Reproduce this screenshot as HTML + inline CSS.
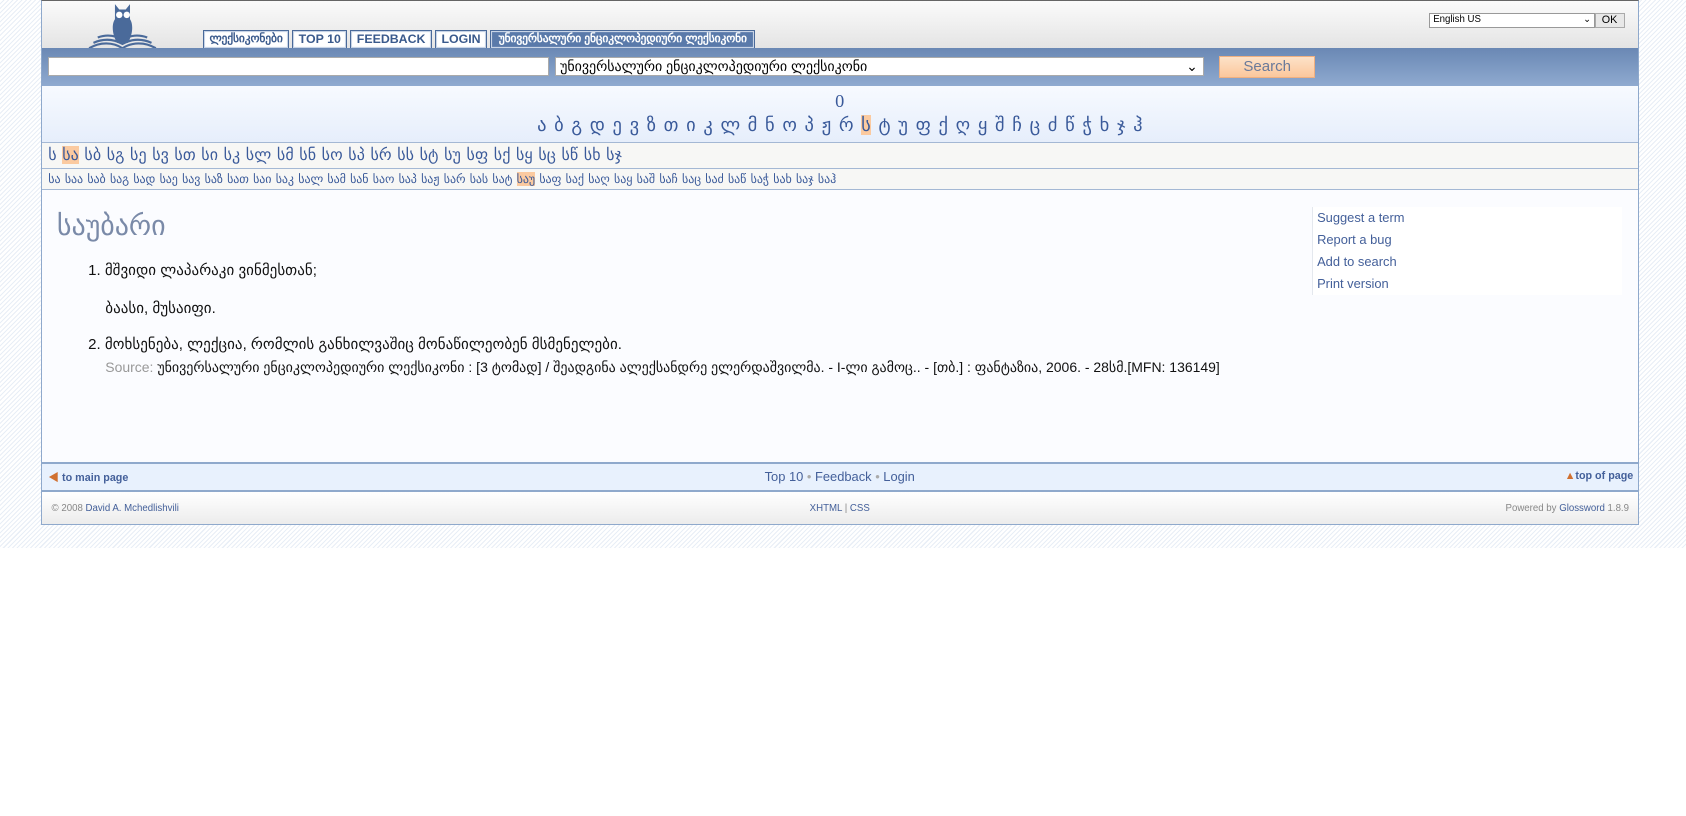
<!DOCTYPE html>
<html><head><meta charset="utf-8"><style>
html{background:#fff}
body{margin:0;}
#pg{zoom:1.0753;height:510px;background:repeating-linear-gradient(135deg,#fff 0 2px,#e8eef6 2px 3px);font-family:"Liberation Sans","Noto Sans CJK SC",sans-serif;position:relative}
#w{position:absolute;left:38px;top:0;width:1484px;height:486px;border:1px solid #8fa9cc;border-top:1px solid #666;background:#fbfcff;}
.hd{height:44px;background:linear-gradient(#fbfbfb,#e4e4e4);position:relative}
.tabs{position:absolute;left:150px;top:27px;display:flex;gap:3px}
.tab{border:1px solid #4a6a9a;border-bottom:none;background:#fff;color:#3a5a8c;font-weight:bold;font-size:11.5px;height:16px;line-height:16px;padding:0 5px;box-shadow:inset 0 0 0 1px #c8d4e6}
.tab.g{font-size:10.5px}
.tab.a{background:#5a7aaa;color:#fff;font-size:10.5px;padding:0 7px}
.sb{height:35px;background:linear-gradient(#6a88b4,#8faad0);position:relative}
.in{position:absolute;top:8px;height:18px;background:#fff;border:1px solid #aaa;box-sizing:border-box;font-size:13px;line-height:16px;padding-left:4px}
.btn{position:absolute;left:1095px;top:7px;width:89px;height:21px;background:linear-gradient(#fde2c8,#fbc79c);border:1px solid #f0b080;box-sizing:border-box;color:#6a7a9a;text-align:center;font-size:14px;line-height:19px}
.al{height:52px;background:linear-gradient(#f7faff,#e6eefb);text-align:center;color:#3a5a9a;font-family:"Liberation Serif",serif;font-size:17px;border-bottom:1px solid #a4b8d4}
.hl{background:#fbcaa0}
.r1{height:23px;border-bottom:1px solid #a4b8d4;background:#f7f7f5;color:#3a5a9a;font-size:15px;line-height:23px;padding-left:6px;word-spacing:1px}
.r2{height:19px;border-bottom:1px solid #a4b8d4;background:#f7f7f5;color:#3a5a9a;font-size:11px;line-height:19px;padding-left:6px;word-spacing:1px}
.ct{position:relative;height:253px}
h1{position:absolute;left:14px;top:18px;margin:0;font-weight:normal;color:#7a8aa8;font-size:26px}
.d{position:absolute;left:43px;font-size:14px;color:#111}
.side{position:absolute;left:1181px;top:16px;width:288px;height:82px;background:#fff;border-left:1px solid #e4e8ee;font-size:12px;color:#44609a}
.side div{padding-left:4px;height:20.5px;line-height:20px}
.fn{height:24px;background:#e8f1fd;border-top:2px solid #8fa9cc;border-bottom:2px solid #8fa9cc;position:relative;font-size:12px;color:#44609a}
.ft{height:30px;background:linear-gradient(#fff,#ececec);position:relative;font-size:9px;color:#888}
</style></head><body><div id="pg">
<div id="w">
<div class="hd">
<svg style="position:absolute;left:42px;top:1px" width="68" height="46" viewBox="0 0 68 46"><path d="M26 2l4 5h6l4-5v14c3 4 3 14-2 22h-10c-5-8-5-18-2-22z" fill="#4a6a9a"/><circle cx="30" cy="12" r="3" fill="#fff"/><circle cx="37" cy="12" r="3" fill="#fff"/><path d="M2 43c10-6 22-6 31 0c9-6 21-6 31 0M6 38c9-4 18-4 27 1c9-5 18-5 27-1M10 33c8-3 16-2 23 2c7-4 15-5 23-2" stroke="#4a6a9a" stroke-width="2" fill="none"/></svg>
<div class="tabs"><span class="tab g">ლექსიკონები</span><span class="tab">TOP 10</span><span class="tab">FEEDBACK</span><span class="tab">LOGIN</span><span class="tab a">უნივერსალური ენციკლოპედიური ლექსიკონი</span></div>
<div style="position:absolute;left:1290px;top:11px;width:150px;height:12px;border:1px solid #999;background:#fff;font-size:9px;line-height:12px;padding-left:3px;box-sizing:content-box">English US<span style="position:absolute;right:3px">⌄</span></div>
<div style="position:absolute;left:1444px;top:11px;width:26px;height:12px;border:1px solid #aaa;background:#e8e8e8;font-size:10px;line-height:12px;text-align:center">OK</div>
</div>
<div class="sb"><div class="in" style="left:6px;width:466px"></div><div class="in" style="left:477px;width:604px">უნივერსალური ენციკლოპედიური ლექსიკონი<span style="position:absolute;right:5px">⌄</span></div><div class="btn">Search</div></div>
<div class="al"><div style="padding-top:4px;line-height:22px">0</div><div style="line-height:22px;word-spacing:3px">ა ბ გ დ ე ვ ზ თ ი კ ლ მ ნ ო პ ჟ რ <span class="hl">ს</span> ტ უ ფ ქ ღ ყ შ ჩ ც ძ წ ჭ ხ ჯ ჰ</div></div>
<div class="r1">ს <span class="hl">სა</span> სბ სგ სე სვ სთ სი სკ სლ სმ სნ სო სპ სრ სს სტ სუ სფ სქ სყ სც სწ სხ სჯ</div>
<div class="r2">სა საა საბ საგ სად საე სავ საზ სათ საი საკ სალ სამ სან საო საპ საჟ სარ სას სატ <span class="hl">საუ</span> საფ საქ საღ საყ საშ საჩ საც საძ საწ საჭ სახ საჯ საჰ</div>
<div class="ct">
<h1>საუბარი</h1>
<div class="d" style="top:66px">1. მშვიდი ლაპარაკი ვინმესთან;</div>
<div class="d" style="top:101px;left:59px">ბაასი, მუსაიფი.</div>
<div class="d" style="top:135px">2. მოხსენება, ლექცია, რომლის განხილვაშიც მონაწილეობენ მსმენელები.</div>
<div class="d" style="top:157px;left:59px;font-size:13px"><span style="color:#999">Source:</span> უნივერსალური ენციკლოპედიური ლექსიკონი : [3 ტომად] / შეადგინა ალექსანდრე ელერდაშვილმა. - I-ლი გამოც.. - [თბ.] : ფანტაზია, 2006. - 28სმ.[MFN: 136149]</div>
<div class="side"><div>Suggest a term</div><div>Report a bug</div><div>Add to search</div><div>Print version</div></div>
</div>
<div class="fn"><span style="position:absolute;left:6px;top:6px;font-size:10px;font-weight:bold"><span style="color:#d07030">◀</span> to main page</span><span style="position:absolute;left:0;right:0;text-align:center;top:5px">Top 10 <span style="color:#aaa">•</span> Feedback <span style="color:#aaa">•</span> Login</span><span style="position:absolute;right:4px;top:6px;font-size:10px;font-weight:bold"><span style="color:#d07030">▲</span>top of page</span></div>
<div class="ft"><span style="position:absolute;left:9px;top:10px">© 2008 <span style="color:#44609a">David A. Mchedlishvili</span></span><span style="position:absolute;left:0;right:0;text-align:center;top:10px;color:#44609a">XHTML <span style="color:#888">|</span> CSS</span><span style="position:absolute;right:8px;top:10px">Powered by <span style="color:#44609a">Glossword</span> 1.8.9</span></div>
</div>
</div></body></html>
